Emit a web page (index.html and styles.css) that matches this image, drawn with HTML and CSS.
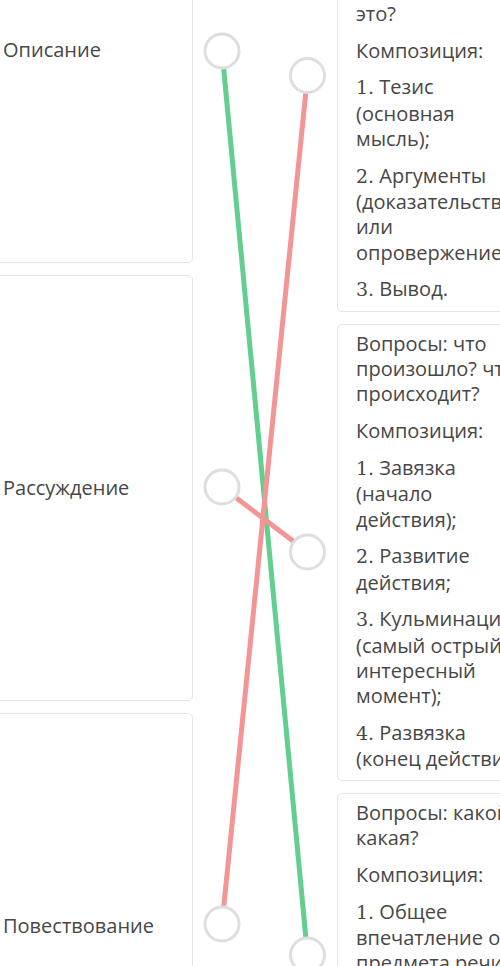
FILE: index.html
```html
<!DOCTYPE html>
<html lang="ru">
<head>
    <meta charset="UTF-8">
    <meta name="viewport" content="width=device-width, initial-scale=1.0">
    <title>Сопоставление</title>
    <link rel="stylesheet" href="styles.css">
</head>
<body>
    <div class="board">
        <div class="col-left">
            <div class="term"><span>Описание</span></div>
            <div class="term"><span>Рассуждение</span></div>
            <div class="term"><span>Повествование</span></div>
        </div>

        <svg class="links" width="144" height="1320" viewBox="0 0 144 1320">
            <!-- lines go centre to centre, circles cover the ends -->
            <line class="ok" x1="29" y1="214" x2="114.5" y2="1118" />
            <line class="bad" x1="114.5" y1="238.5" x2="29" y2="1087" />
            <line class="bad" x1="29" y1="650" x2="114.5" y2="715" />
            <circle class="dot" cx="29" cy="214" r="17" />
            <circle class="dot" cx="114.5" cy="238.5" r="17" />
            <circle class="dot" cx="29" cy="650" r="17" />
            <circle class="dot" cx="114.5" cy="715" r="17" />
            <circle class="dot" cx="29" cy="1087" r="17" />
            <circle class="dot" cx="114.5" cy="1118" r="17" />
        </svg>

        <div class="col-right">
            <div class="def">
                <p>Вопросы: почему? что из этого следует? как это доказать? почему утверждается это?</p>
                <p>Композиция:</p>
                <p><span class="num">1.</span> Тезис (основная мысль);</p>
                <p><span class="num">2.</span> Аргументы (доказательства или опровержение);</p>
                <p><span class="num">3.</span> Вывод.</p>
            </div>
            <div class="def">
                <p>Вопросы: что произошло? что происходит?</p>
                <p>Композиция:</p>
                <p><span class="num">1.</span> Завязка (начало действия);</p>
                <p><span class="num">2.</span> Развитие действия;</p>
                <p><span class="num">3.</span> Кульминация (самый острый, интересный момент);</p>
                <p><span class="num">4.</span> Развязка (конец действия).</p>
            </div>
            <div class="def">
                <p>Вопросы: какой? какая?</p>
                <p>Композиция:</p>
                <p><span class="num">1.</span> Общее впечатление от предмета речи;</p>
                <p><span class="num">2.</span> Признаки предмета;</p>
                <p><span class="num">3.</span> Вывод.</p>
            </div>
        </div>
    </div>
</body>
</html>
```

FILE: styles.css
```css
body { margin: 0; background: #fff; overflow: hidden; font-family: "Open Sans", "Noto Sans", sans-serif; font-size: 20px; color: #474747; }
.board { display: grid; grid-template-columns: 208px 144px 208px; margin: -163px 0 0 -15px; align-items: start; }
.col-left { display: flex; flex-direction: column; gap: 12px; }
.col-right { display: flex; flex-direction: column; gap: 12px; margin-top: 5px; }
.term { box-sizing: border-box; height: 426px; padding: 0 17px; display: flex; align-items: center; border: 1px solid #e4e4e4; border-radius: 5px; line-height: 25.5px; }
.def { box-sizing: border-box; width: 208px; padding: 6px 17px 8px 18px; border: 1px solid #e4e4e4; border-radius: 5px; line-height: 25.3px; }
.def p { margin: 0 0 11.5px; }
.def p:last-child { margin-bottom: 0; }
.num { font-family: "DejaVu Serif", serif; font-size: 19px; }
.links { display: block; }
.links line { stroke-width: 5; }
.links .ok { stroke: #62cf8e; }
.links .bad { stroke: #f29594; }
.links .dot { fill: #fff; stroke: #dedede; stroke-width: 3; }
```
